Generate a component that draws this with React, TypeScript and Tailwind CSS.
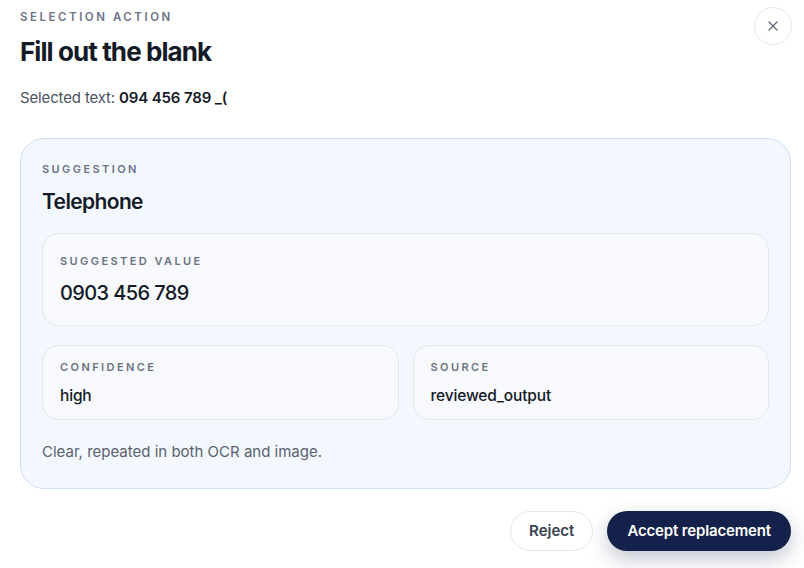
import { X } from 'lucide-react'

const font = { fontFamily: 'Inter, "Noto Sans", sans-serif' }

function Field({ label, value, big }: { label: string; value: string; big?: boolean }) {
  return (
    <div className={`rounded-2xl border border-[#e3e8ef] bg-[#f7f9fc] px-[17px] ${big ? 'pt-[19px] pb-[18px]' : 'pt-[13px] pb-[12px]'}`}>
      <p className="text-[11px] font-semibold uppercase leading-4 tracking-[0.22em] text-[#6b7380]">{label}</p>
      {big ? (
        <p className="mt-[10px] text-[20px] font-medium leading-7 tracking-[-0.03em] text-[#141a26]">{value}</p>
      ) : (
        <p className="mt-[10px] text-[15.5px] font-medium leading-[22px] tracking-[-0.01em] text-[#141a26]">{value}</p>
      )}
    </div>
  )
}

export default function App() {
  return (
    <div className="h-[568px] w-[804px] overflow-hidden bg-white" style={font}>
      <div className="flex items-start justify-between pl-5 pr-3 pt-[9px]">
        <div>
          <p className="text-[11.5px] font-semibold uppercase leading-4 tracking-[0.22em] text-[#6b7385]">Selection action</p>
          <h1 className="mt-[11px] text-[26px] font-bold leading-8 tracking-[-0.035em] text-[#141a26]">Fill out the blank</h1>
          <p className="mt-[20px] text-[15px] leading-5 tracking-[-0.01em] text-[#4b5260]">
            Selected text: <span className="font-semibold text-[#141a26]">094 456 789 _(</span>
          </p>
        </div>
        <button className="mt-[-2px] flex h-[38px] w-[38px] items-center justify-center rounded-full border border-[#e5e7eb] bg-white text-[#5a6275]">
          <X className="h-4 w-4" strokeWidth={1.8} />
        </button>
      </div>

      <div className="ml-5 mr-[13px] mt-[30px] rounded-[24px] border border-[#cfdff3] bg-[#f3f8fe] px-[21px] pb-[26px] pt-[22px]">
        <p className="text-[11px] font-semibold uppercase leading-4 tracking-[0.22em] text-[#6b7385]">Suggestion</p>
        <p className="mt-[11px] text-[21px] font-semibold leading-7 tracking-[-0.03em] text-[#141a26]">Telephone</p>
        <div className="mt-[17px] flex flex-col gap-[19px]">
          <Field label="Suggested value" value="0903 456 789" big />
          <div className="grid grid-cols-2 gap-[14px]">
            <Field label="Confidence" value="high" />
            <Field label="Source" value="reviewed_output" />
          </div>
        </div>
        <p className="mt-[22px] text-[15px] leading-5 text-[#5b616c]">Clear, repeated in both OCR and image.</p>
      </div>

      <div className="mt-[22px] flex justify-end gap-[14px] pr-[13px]">
        <button className="h-10 rounded-full border border-[#e5e7eb] bg-white px-[18px] text-[15px] font-semibold text-[#3b4250]">
          Reject
        </button>
        <button className="h-10 rounded-full bg-[#14214a] px-[20px] text-[15px] font-semibold tracking-[-0.01em] text-white shadow-[0_8px_20px_rgba(20,33,74,0.25)]">
          Accept replacement
        </button>
      </div>
    </div>
  )
}
